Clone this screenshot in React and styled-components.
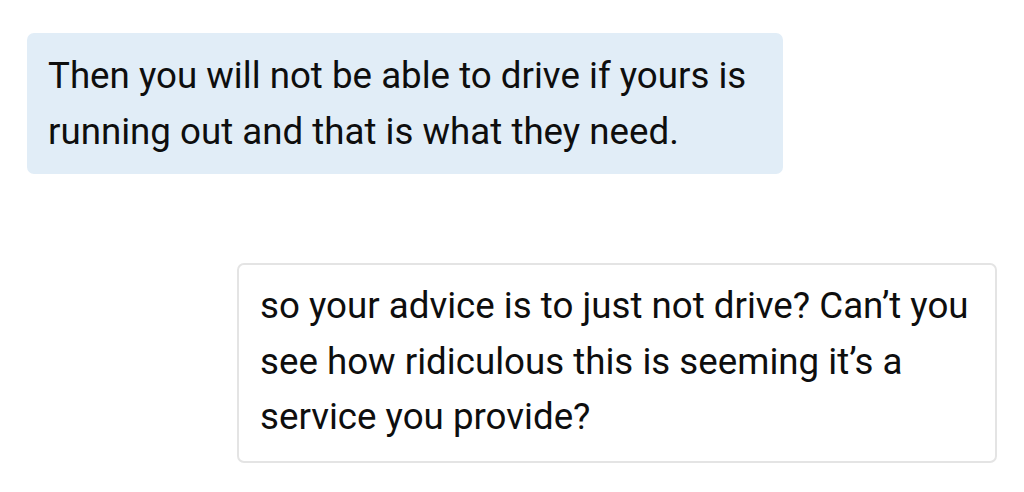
import React from "react";
import styled, { createGlobalStyle } from "styled-components";

const GlobalStyle = createGlobalStyle`
  html, body {
    margin: 0;
    padding: 0;
    background: #ffffff;
  }
  body {
    font-family: Roboto, "Noto Sans", sans-serif;
    color: #0e0e0e;
  }
`;

const Thread = styled.div`
  display: flex;
  flex-direction: column;
  padding: 33px 27px 0 27px;
  gap: 89px;
`;

const Bubble = styled.div`
  box-sizing: border-box;
  width: ${(p) => p.$width}px;
  align-self: ${(p) => (p.$mine ? "flex-end" : "flex-start")};
  background: ${(p) => (p.$mine ? "#ffffff" : "#e1edf7")};
  border: ${(p) => (p.$mine ? "2px solid #e4e4e4" : "none")};
  border-radius: 7px;
  padding: ${(p) => (p.$mine ? "13px 21px 16px 21px" : "15px 21px 15px 21px")};
  font-size: 36.7px;
  line-height: 55.5px;
  letter-spacing: 0;
`;

export default function App() {
  return (
    <>
      <GlobalStyle />
      <Thread>
        <Bubble $width={756}>
          Then you will not be able to drive if yours is
          <br />
          running out and that is what they need.
        </Bubble>
        <Bubble $mine $width={760}>
          so your advice is to just not drive? Can’t you
          <br />
          see how ridiculous this is seeming it’s a
          <br />
          service you provide?
        </Bubble>
      </Thread>
    </>
  );
}
